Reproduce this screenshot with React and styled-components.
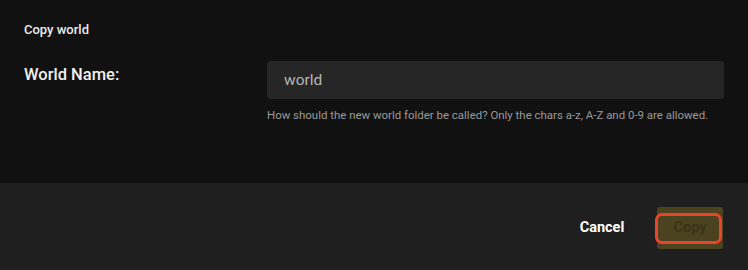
import React, { useState } from "react";
import styled, { createGlobalStyle } from "styled-components";

const GlobalStyle = createGlobalStyle`
  html, body {
    margin: 0;
    padding: 0;
    background: #111111;
  }
  * {
    box-sizing: border-box;
  }
`;

export default function App() {
  const [name, setName] = useState("world");

  return (
    <>
      <GlobalStyle />
      <Dialog>
        <Body>
          <Title>Copy world</Title>
          <FieldRow>
            <Label htmlFor="world-name">World Name:</Label>
            <FieldBox>
              <Input
                id="world-name"
                value={name}
                onChange={(e) => setName(e.target.value)}
              />
              <Help>
                How should the new world folder be called? Only the chars a-z,
                A-Z and 0-9 are allowed.
              </Help>
            </FieldBox>
          </FieldRow>
        </Body>
        <Footer>
          <Button type="button">Cancel</Button>
          <Button type="button" primary disabled>
            Copy
          </Button>
        </Footer>
      </Dialog>
    </>
  );
}

const Dialog = styled.div`
  width: 748px;
  height: 270px;
  display: flex;
  flex-direction: column;
  font-family: Roboto, "Noto Sans", sans-serif;
  color: #f2f2f2;
`;

const Body = styled.div`
  flex: 1;
  background: #111111;
  padding: 22px 24px 0 24px;
`;

const Title = styled.div`
  font-size: 13px;
  font-weight: 500;
  line-height: 16px;
  color: #ececec;
`;

const FieldRow = styled.div`
  display: grid;
  grid-template-columns: 243px 1fr;
  margin-top: 23px;
`;

const Label = styled.label`
  font-size: 16.5px;
  font-weight: 500;
  line-height: 28px;
  color: #f0f0f0;
`;

const FieldBox = styled.div`
  display: flex;
  flex-direction: column;
`;

const Input = styled.input`
  height: 38px;
  width: 100%;
  background: #262626;
  border: none;
  border-radius: 4px;
  padding: 0 17px;
  font-family: inherit;
  font-size: 15.5px;
  color: #b5b5b5;
  outline: none;
`;

const Help = styled.div`
  margin-top: 9px;
  font-size: 11.45px;
  line-height: 14px;
  color: #9a9a9a;
`;

const Footer = styled.div`
  height: 87px;
  background: #1f1f1f;
  display: flex;
  justify-content: flex-end;
  align-items: center;
  gap: 22px;
  padding: 0 25px 0 0;
`;

const Button = styled.button`
  position: relative;
  width: 66px;
  height: 42px;
  margin-top: 2px;
  border: none;
  border-radius: 3px;
  font-family: inherit;
  font-size: 14.5px;
  font-weight: 700;
  background: ${(p) => (p.primary ? "#4b4220" : "transparent")};
  color: ${(p) => (p.primary ? "#3a3318" : "#ffffff")};

  &::after {
    content: "";
    display: ${(p) => (p.primary ? "block" : "none")};
    position: absolute;
    top: 6px;
    bottom: 5px;
    left: -2px;
    right: 1px;
    border: 3px solid #e8452c;
    border-radius: 7px;
    pointer-events: none;
  }
`;
